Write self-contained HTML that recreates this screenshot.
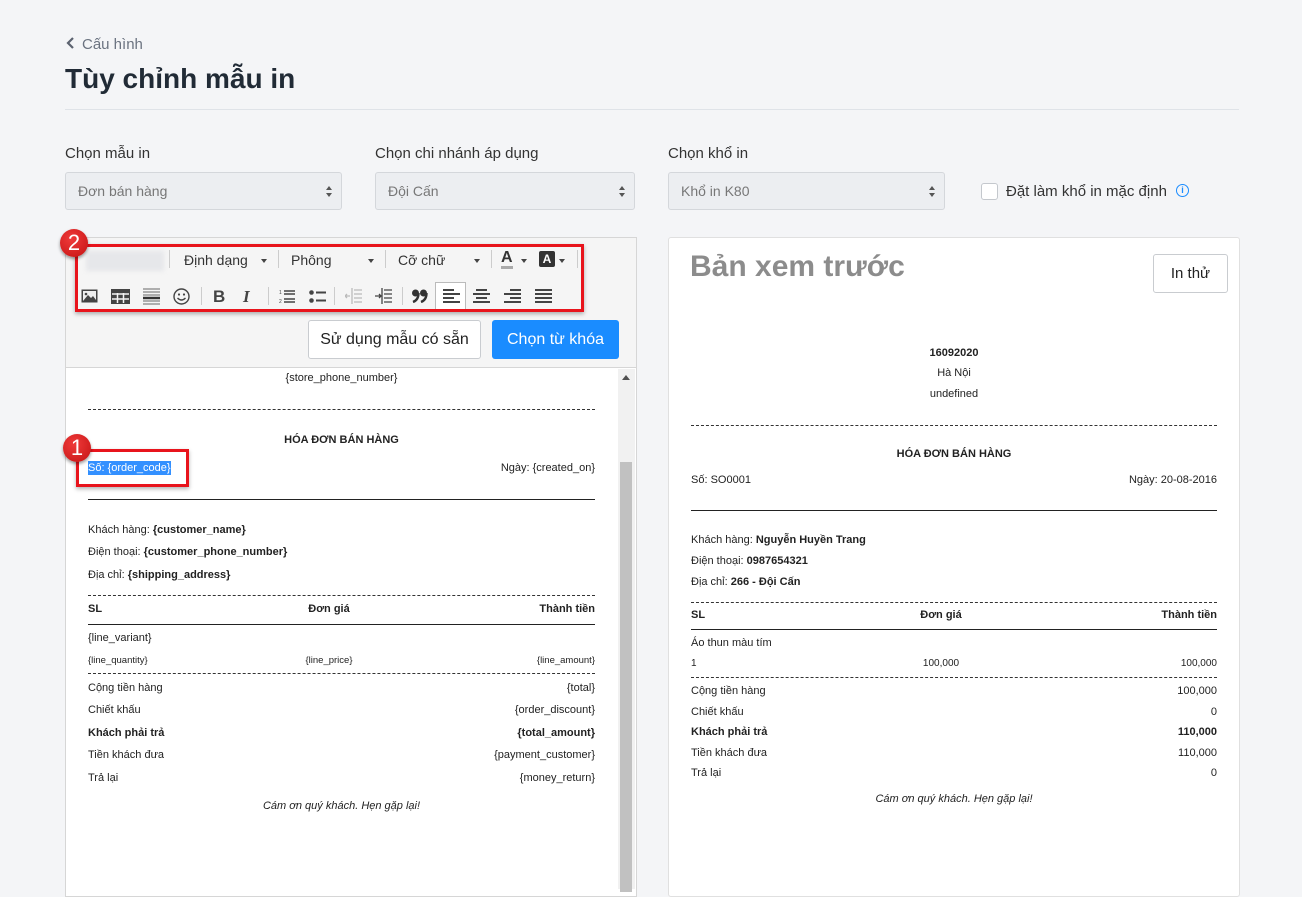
<!DOCTYPE html>
<html><head><meta charset="utf-8">
<style>
*{box-sizing:border-box;margin:0;padding:0}
body{width:1302px;height:887px;overflow:hidden;background:#f4f5f7;font-family:"Liberation Sans",Arial,sans-serif;color:#212b36;position:relative}
.a{position:absolute}
.lbl{font-size:15px;color:#333}
.sel{position:absolute;top:172px;height:38px;background:#eceef1;border:1px solid #d4d7db;border-radius:3px;font-size:14px;color:#777;padding:10px 12px}
.sel:after{content:"";position:absolute;right:9px;top:13px;border:3.5px solid transparent;border-bottom:4px solid #555;border-top:0}
.sel:before{content:"";position:absolute;right:9px;top:20px;border:3.5px solid transparent;border-top:4px solid #555;border-bottom:0}
.r{position:absolute;display:flex;justify-content:space-between;font-size:11px;line-height:14px;color:#222}
.m{position:absolute;top:0;transform:translateX(-50%);white-space:nowrap}
.c{position:absolute;text-align:center;font-size:11px;line-height:14px;color:#222}
.b{font-weight:bold}
.dash{position:absolute;height:0;border-top:1px dashed #333}
.sol{position:absolute;height:0;border-top:1px solid #222}
.badge{position:absolute;width:28px;height:28px;border-radius:50%;background:radial-gradient(circle at 40% 35%,#ef3a3a,#c41212);color:#fff;font-size:22px;line-height:28px;text-align:center;box-shadow:0 2px 3px rgba(0,0,0,.4)}
.tb svg{position:absolute}
.sep{position:absolute;width:1px;height:18px;background:#ccc}
.dd{position:absolute;font-size:14px;color:#333}
.car{position:absolute;border:3.5px solid transparent;border-top:4px solid #444;border-bottom:0}
</style></head><body>

<div class="a" style="left:66px;top:36px;font-size:15px;color:#6b7380"><svg width="10" height="14" style="vertical-align:-1px;margin-right:6px"><path d="M7 2 L2 7 L7 12" stroke="#5c6370" stroke-width="2.2" fill="none"/></svg>Cấu hình</div>
<div class="a" style="left:65px;top:63px;font-size:28px;font-weight:bold;color:#212b36">Tùy chỉnh mẫu in</div>
<div class="a" style="left:65px;top:109px;width:1174px;height:1px;background:#dfe3e8"></div>

<div class="a lbl" style="left:65px;top:145px">Chọn mẫu in</div>
<div class="a lbl" style="left:375px;top:145px">Chọn chi nhánh áp dụng</div>
<div class="a lbl" style="left:668px;top:145px">Chọn khổ in</div>
<div class="sel" style="left:65px;width:277px">Đơn bán hàng</div>
<div class="sel" style="left:375px;width:260px">Đội Cấn</div>
<div class="sel" style="left:668px;width:277px">Khổ in K80</div>
<div class="a" style="left:981px;top:183px;width:17px;height:17px;background:#fff;border:1px solid #c4c8cd;border-radius:3px"></div>
<div class="a" style="left:1006px;top:183px;font-size:15px;color:#333">Đặt làm khổ in mặc định</div>
<div class="a" style="left:1176px;top:184px;width:13px;height:13px;border:1.5px solid #1a8cff;border-radius:50%;color:#1a8cff;font-size:9px;font-weight:bold;text-align:center;line-height:10px">i</div>

<div class="a" style="left:65px;top:237px;width:572px;height:660px;background:#fff;border:1px solid #d6d6d6"></div>
<div class="a" style="left:66px;top:238px;width:570px;height:130px;background:#f5f5f5;border-bottom:1px solid #d6d6d6"></div>
<div class="a" style="left:86px;top:251px;width:78px;height:20px;background:#e6e7ea;filter:blur(2px)"></div>
<div class="tb">
<div class="sep" style="left:169px;top:250px"></div>
<div class="dd" style="left:184px;top:252px">Định dạng</div><div class="car" style="left:261px;top:259px"></div>
<div class="sep" style="left:278px;top:250px"></div>
<div class="dd" style="left:291px;top:252px">Phông</div><div class="car" style="left:368px;top:259px"></div>
<div class="sep" style="left:385px;top:250px"></div>
<div class="dd" style="left:398px;top:252px">Cỡ chữ</div><div class="car" style="left:474px;top:259px"></div>
<div class="sep" style="left:491px;top:250px"></div>
<div class="a" style="left:501px;top:250px;font-size:16px;font-weight:bold;color:#333;border-bottom:3px solid #aaa;line-height:16px">A</div><div class="car" style="left:521px;top:259px"></div>
<div class="a" style="left:539px;top:251px;width:16px;height:16px;background:#333;color:#fff;font-size:12px;font-weight:bold;text-align:center;line-height:16px;border-radius:2px">A</div><div class="car" style="left:559px;top:259px"></div>
<div class="sep" style="left:577px;top:250px"></div>
<svg style="left:81px;top:289px" width="17" height="14"><rect x=".5" y=".5" width="16" height="13" fill="#444"/><rect x="2" y="2" width="13" height="10" fill="#eee"/><path d="M2 12 L7 6 L10 9 L12 7 L15 11 V12Z" fill="#444"/><circle cx="5" cy="5" r="1.3" fill="#444"/></svg>
<svg style="left:111px;top:289px" width="19" height="15"><rect width="19" height="15" fill="#444"/><path d="M1 5H18M1 10H18M6.5 4V14M12.5 4V14" stroke="#f5f5f5" stroke-width="1.5"/></svg>
<svg style="left:143px;top:288px" width="17" height="17"><path d="M0 1H17M0 4H17M0 7H17M0 13H17M0 16H17" stroke="#666" stroke-width="1"/><path d="M0 10H17" stroke="#333" stroke-width="2.5"/></svg>
<svg style="left:173px;top:288px" width="17" height="17"><circle cx="8.5" cy="8.5" r="7.5" fill="none" stroke="#444" stroke-width="1.4"/><circle cx="6" cy="6.5" r="1.1" fill="#444"/><circle cx="11" cy="6.5" r="1.1" fill="#444"/><path d="M4.5 10 Q8.5 14 12.5 10" stroke="#444" stroke-width="1.4" fill="none"/></svg>
<div class="sep" style="left:201px;top:287px"></div>
<div class="a" style="left:213px;top:287px;font-size:17px;font-weight:bold;color:#444">B</div>
<div class="a" style="left:243px;top:287px;font-size:17px;font-weight:bold;font-style:italic;font-family:'Liberation Serif',serif;color:#444">I</div>
<div class="sep" style="left:268px;top:287px"></div>
<svg style="left:279px;top:289px" width="16" height="15"><text x="0" y="5" font-size="5" fill="#444">1</text><text x="0" y="14" font-size="5" fill="#444">2</text><path d="M5 2H16M5 5H16M5 10H16M5 13H16" stroke="#444" stroke-width="1.6"/></svg>
<svg style="left:309px;top:289px" width="17" height="15"><circle cx="2.5" cy="3.5" r="2.3" fill="#444"/><circle cx="2.5" cy="11.5" r="2.3" fill="#444"/><path d="M7 3.5H17M7 11.5H17" stroke="#444" stroke-width="2"/></svg>
<div class="sep" style="left:334px;top:287px"></div>
<svg style="left:345px;top:288px" width="17" height="16"><path d="M0 8H5M2 6L0 8L2 10M7 0V16M9 2H17M9 6H17M9 10H17M9 14H17" stroke="#bbb" stroke-width="1.3" fill="none"/></svg>
<svg style="left:375px;top:288px" width="17" height="16"><path d="M0 8H6M4 6L6 8L4 10M7 0V16M9 2H17M9 6H17M9 10H17M9 14H17" stroke="#444" stroke-width="1.3" fill="none"/></svg>
<div class="sep" style="left:402px;top:287px"></div>
<svg style="left:412px;top:289px" width="16" height="14"><circle cx="3.5" cy="4" r="3.5" fill="#333"/><path d="M6.5 4 Q6.5 11 1 13" stroke="#333" stroke-width="2.4" fill="none"/><circle cx="11.5" cy="4" r="3.5" fill="#333"/><path d="M14.5 4 Q14.5 11 9 13" stroke="#333" stroke-width="2.4" fill="none"/></svg>
<div class="a" style="left:435px;top:282px;width:31px;height:30px;background:#fff;border:1px solid #bbb"></div>
<svg style="left:443px;top:289px" width="17" height="14"><path d="M0 1H11M0 5H17M0 9H11M0 13H17" stroke="#444" stroke-width="2"/></svg>
<svg style="left:473px;top:289px" width="17" height="14"><path d="M3 1H14M0 5H17M3 9H14M0 13H17" stroke="#444" stroke-width="2"/></svg>
<svg style="left:504px;top:289px" width="17" height="14"><path d="M6 1H17M0 5H17M6 9H17M0 13H17" stroke="#444" stroke-width="2"/></svg>
<svg style="left:535px;top:289px" width="17" height="14"><path d="M0 1H17M0 5H17M0 9H17M0 13H17" stroke="#444" stroke-width="2"/></svg>
</div>
<div class="a" style="left:75px;top:244px;width:509px;height:68px;border:3px solid #e8141c;box-shadow:0 2px 4px rgba(0,0,0,.3)"></div>
<div class="badge" style="left:60px;top:229px">2</div>

<div class="a" style="left:308px;top:320px;width:173px;height:39px;background:#fff;border:1px solid #c9ccd0;border-radius:3px;font-size:16px;color:#222;text-align:center;line-height:37px">Sử dụng mẫu có sẵn</div>
<div class="a" style="left:492px;top:320px;width:127px;height:39px;background:#1a8cff;border-radius:3px;font-size:16px;color:#fff;text-align:center;line-height:39px">Chọn từ khóa</div>

<div class="a" style="left:618px;top:369px;width:17px;height:520px;background:#f1f1f1"></div>
<div class="a" style="left:620px;top:462px;width:12px;height:430px;background:#c1c1c1"></div>
<div class="a" style="left:622px;top:375px;border:4px solid transparent;border-bottom:5px solid #505050;border-top:0"></div>

<div class="c" style="left:88px;width:507px;top:371px">{store_phone_number}</div>
<div class="dash" style="left:88px;width:507px;top:409px"></div>
<div class="c b" style="left:88px;width:507px;top:433px">HÓA ĐƠN BÁN HÀNG</div>
<div class="r" style="left:88px;width:507px;top:461px"><span style="background:#3390ff;color:#fff">Số: {order_code}</span><span>Ngày: {created_on}</span></div>
<div class="a" style="left:76px;top:449px;width:113px;height:38px;border:3px solid #e8141c;box-shadow:0 2px 4px rgba(0,0,0,.3)"></div>
<div class="badge" style="left:63px;top:434px">1</div>
<div class="sol" style="left:88px;width:507px;top:499px"></div>
<div class="r" style="left:88px;width:507px;top:523px"><span>Khách hàng: <b>{customer_name}</b></span></div>
<div class="r" style="left:88px;width:507px;top:545px"><span>Điện thoại: <b>{customer_phone_number}</b></span></div>
<div class="r" style="left:88px;width:507px;top:568px"><span>Địa chỉ: <b>{shipping_address}</b></span></div>
<div class="dash" style="left:88px;width:507px;top:595px"></div>
<div class="r b" style="left:88px;width:507px;top:602px"><span>SL</span><span class="m" style="left:241px">Đơn giá</span><span>Thành tiền</span></div>
<div class="sol" style="left:88px;width:507px;top:624px"></div>
<div class="r" style="left:88px;width:507px;top:631px"><span>{line_variant}</span></div>
<div class="r" style="left:88px;width:507px;top:654px;font-size:9.5px"><span>{line_quantity}</span><span class="m" style="left:241px">{line_price}</span><span>{line_amount}</span></div>
<div class="dash" style="left:88px;width:507px;top:673px"></div>
<div class="r" style="left:88px;width:507px;top:681px"><span>Cộng tiền hàng</span><span>{total}</span></div>
<div class="r" style="left:88px;width:507px;top:703px"><span>Chiết khấu</span><span>{order_discount}</span></div>
<div class="r b" style="left:88px;width:507px;top:726px"><span>Khách phải trả</span><span>{total_amount}</span></div>
<div class="r" style="left:88px;width:507px;top:748px"><span>Tiền khách đưa</span><span>{payment_customer}</span></div>
<div class="r" style="left:88px;width:507px;top:771px"><span>Trả lại</span><span>{money_return}</span></div>
<div class="c" style="left:88px;width:507px;top:799px;font-style:italic">Cám ơn quý khách. Hẹn gặp lại!</div>

<div class="a" style="left:668px;top:237px;width:572px;height:660px;background:#fff;border:1px solid #e0e0e0;border-radius:3px"></div>
<div class="a" style="left:690px;top:250px;font-size:30px;font-weight:bold;color:#8c8c8c">Bản xem trước</div>
<div class="a" style="left:1153px;top:254px;width:75px;height:39px;background:#fff;border:1px solid #c9ccd0;border-radius:3px;font-size:15px;color:#222;text-align:center;line-height:37px">In thử</div>
<div class="c b" style="left:691px;width:526px;top:346px">16092020</div>
<div class="c" style="left:691px;width:526px;top:366px">Hà Nội</div>
<div class="c" style="left:691px;width:526px;top:387px">undefined</div>
<div class="dash" style="left:691px;width:526px;top:425px"></div>
<div class="c b" style="left:691px;width:526px;top:447px">HÓA ĐƠN BÁN HÀNG</div>
<div class="r" style="left:691px;width:526px;top:473px"><span>Số: SO0001</span><span>Ngày: 20-08-2016</span></div>
<div class="sol" style="left:691px;width:526px;top:510px"></div>
<div class="r" style="left:691px;width:526px;top:533px"><span>Khách hàng: <b>Nguyễn Huyền Trang</b></span></div>
<div class="r" style="left:691px;width:526px;top:554px"><span>Điện thoại: <b>0987654321</b></span></div>
<div class="r" style="left:691px;width:526px;top:575px"><span>Địa chỉ: <b>266 - Đội Cấn</b></span></div>
<div class="dash" style="left:691px;width:526px;top:602px"></div>
<div class="r b" style="left:691px;width:526px;top:608px"><span>SL</span><span class="m" style="left:250px">Đơn giá</span><span>Thành tiền</span></div>
<div class="sol" style="left:691px;width:526px;top:629px"></div>
<div class="r" style="left:691px;width:526px;top:636px"><span>Áo thun màu tím</span></div>
<div class="r" style="left:691px;width:526px;top:657px;font-size:10px"><span>1</span><span class="m" style="left:250px">100,000</span><span>100,000</span></div>
<div class="dash" style="left:691px;width:526px;top:677px"></div>
<div class="r" style="left:691px;width:526px;top:684px"><span>Cộng tiền hàng</span><span>100,000</span></div>
<div class="r" style="left:691px;width:526px;top:705px"><span>Chiết khấu</span><span>0</span></div>
<div class="r b" style="left:691px;width:526px;top:725px"><span>Khách phải trả</span><span>110,000</span></div>
<div class="r" style="left:691px;width:526px;top:746px"><span>Tiền khách đưa</span><span>110,000</span></div>
<div class="r" style="left:691px;width:526px;top:766px"><span>Trả lại</span><span>0</span></div>
<div class="c" style="left:691px;width:526px;top:792px;font-style:italic">Cám ơn quý khách. Hẹn gặp lại!</div>
</body></html>
